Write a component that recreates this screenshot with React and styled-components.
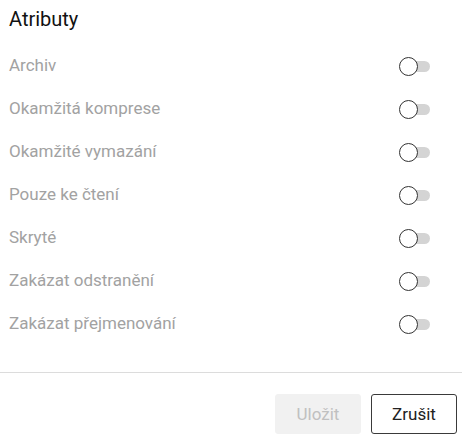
import React from "react";
import styled, { createGlobalStyle } from "styled-components";

const Global = createGlobalStyle`
  html, body { margin: 0; padding: 0; background: #fff; }
  body { font-family: Roboto, "Noto Sans", sans-serif; }
`;

const Page = styled.div`
  width: 462px;
  height: 440px;
  box-sizing: border-box;
  padding-top: 7px;
  display: flex;
  flex-direction: column;
`;

const Title = styled.h2`
  margin: 0 0 13px 9px;
  font-size: 20px;
  font-weight: 400;
  line-height: 24px;
  color: #111;
`;

const List = styled.div`
  display: flex;
  flex-direction: column;
`;

const Row = styled.div`
  height: 43px;
  display: flex;
  align-items: center;
  justify-content: space-between;
  padding: 0 32px 0 9px;
`;

const Label = styled.span`
  font-size: 17px;
  line-height: 43px;
  color: #a2a2a2;
`;

const Toggle = styled.span`
  position: relative;
  width: 31px;
  height: 19px;
  display: inline-block;
  margin-top: 2px;
`;

const Track = styled.span`
  position: absolute;
  left: 9px;
  right: 0;
  top: 4px;
  height: 11px;
  border-radius: 6px;
  background: #d4d4d4;
`;

const Knob = styled.span`
  position: absolute;
  left: 0;
  top: 0;
  width: 17px;
  height: 17px;
  border-radius: 50%;
  background: #fff;
  border: 1px solid #333;
`;

const Divider = styled.div`
  margin-top: 27px;
  height: 1px;
  background: #dcdcdc;
`;

const Footer = styled.div`
  display: flex;
  justify-content: flex-end;
  gap: 10px;
  padding: 21px 5px 0 0;
`;

const Button = styled.button`
  width: 86px;
  height: 40px;
  box-sizing: border-box;
  border-radius: 3px;
  font-family: Roboto, "Noto Sans", sans-serif;
  font-size: 17px;
  padding: 0;
  background: ${(p) => (p.$disabled ? "#f1f1f1" : "#fff")};
  color: ${(p) => (p.$disabled ? "#c0c0c0" : "#222")};
  border: 1px solid ${(p) => (p.$disabled ? "#f1f1f1" : "#3a3a3a")};
`;

const items = [
  "Archiv",
  "Okamžitá komprese",
  "Okamžité vymazání",
  "Pouze ke čtení",
  "Skryté",
  "Zakázat odstranění",
  "Zakázat přejmenování",
];

export default function App() {
  return (
    <Page>
      <Global />
      <Title>Atributy</Title>
      <List>
        {items.map((t) => (
          <Row key={t}>
            <Label>{t}</Label>
            <Toggle>
              <Track />
              <Knob />
            </Toggle>
          </Row>
        ))}
      </List>
      <Divider />
      <Footer>
        <Button $disabled disabled>Uložit</Button>
        <Button>Zrušit</Button>
      </Footer>
    </Page>
  );
}
